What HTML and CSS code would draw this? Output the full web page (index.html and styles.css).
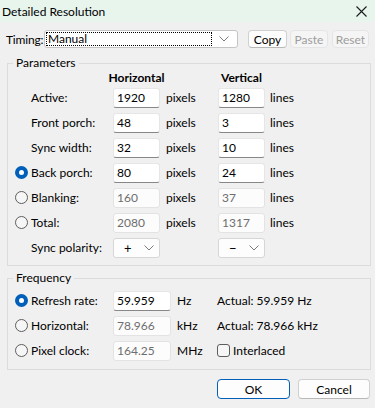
FILE: index.html
```html
<!DOCTYPE html>
<html lang="en">
  <head>
    <meta charset="UTF-8" />
    <title>Detailed Resolution</title>
    <link rel="stylesheet" href="styles.css">
  </head>
  <body>
    <div class="titlebar">
      <span>Detailed Resolution</span>
      <svg class="close" width="11" height="11" viewBox="0 0 11 11"><path d="M0.5 0.5 L10.5 10.5 M10.5 0.5 L0.5 10.5" stroke="#1a1a1a" stroke-width="1.1" fill="none"/></svg>
    </div>

    <div class="timing">
      <span class="timingLabel">Timing:</span>
      <div class="combo comboWide">
        <span class="focusText">Manual</span>
        <svg class="chev" width="10" height="6" viewBox="0 0 10 6"><path d="M0.5 0.5 L5 5 L9.5 0.5" stroke="#7a7a7a" fill="none"/></svg>
      </div>
      <button class="btn btnCopy">Copy</button>
      <button class="btn btnPaste" disabled>Paste</button>
      <button class="btn btnReset" disabled>Reset</button>
    </div>

    <fieldset class="group params">
      <legend>Parameters</legend>
      <div class="grid paramGrid">
        <span></span><span></span><span class="head">Horizontal</span><span></span><span class="head">Vertical</span><span></span>

        <span></span><span class="lbl">Active:</span>
        <input class="field" type="text" value="1920"><span class="unit">pixels</span>
        <input class="field" type="text" value="1280"><span class="unit">lines</span>

        <span></span><span class="lbl">Front porch:</span>
        <input class="field" type="text" value="48"><span class="unit">pixels</span>
        <input class="field" type="text" value="3"><span class="unit">lines</span>

        <span></span><span class="lbl">Sync width:</span>
        <input class="field" type="text" value="32"><span class="unit">pixels</span>
        <input class="field" type="text" value="10"><span class="unit">lines</span>

        <input class="radio" type="radio" name="p" checked><span class="lbl">Back porch:</span>
        <input class="field" type="text" value="80"><span class="unit">pixels</span>
        <input class="field" type="text" value="24"><span class="unit">lines</span>

        <input class="radio" type="radio" name="p"><span class="lbl">Blanking:</span>
        <input class="field" type="text" value="160" disabled><span class="unit">pixels</span>
        <input class="field" type="text" value="37" disabled><span class="unit">lines</span>

        <input class="radio" type="radio" name="p"><span class="lbl">Total:</span>
        <input class="field" type="text" value="2080" disabled><span class="unit">pixels</span>
        <input class="field" type="text" value="1317" disabled><span class="unit">lines</span>

        <span></span><span class="lbl">Sync polarity:</span>
        <div class="combo comboSmall">
          <span class="pol">+</span>
          <svg class="chev" width="10" height="6" viewBox="0 0 10 6"><path d="M0.5 0.5 L5 5 L9.5 0.5" stroke="#7a7a7a" fill="none"/></svg>
        </div>
        <span></span>
        <div class="combo comboSmall">
          <span class="pol">&minus;</span>
          <svg class="chev" width="10" height="6" viewBox="0 0 10 6"><path d="M0.5 0.5 L5 5 L9.5 0.5" stroke="#7a7a7a" fill="none"/></svg>
        </div>
        <span></span>
      </div>
    </fieldset>

    <fieldset class="group freq">
      <legend>Frequency</legend>
      <div class="grid freqGrid">
        <input class="radio" type="radio" name="f" checked><span class="lbl">Refresh rate:</span>
        <input class="field wide" type="text" value="59.959"><span class="unit">Hz</span>
        <span class="actual">Actual: 59.959 Hz</span>

        <input class="radio" type="radio" name="f"><span class="lbl">Horizontal:</span>
        <input class="field wide" type="text" value="78.966" disabled><span class="unit">kHz</span>
        <span class="actual">Actual: 78.966 kHz</span>

        <input class="radio" type="radio" name="f"><span class="lbl">Pixel clock:</span>
        <input class="field wide" type="text" value="164.25" disabled><span class="unit">MHz</span>
        <label class="actual check"><input class="checkbox" type="checkbox">Interlaced</label>
      </div>
    </fieldset>

    <div class="footer">
      <button class="btn btnOk">OK</button>
      <button class="btn btnCancel">Cancel</button>
    </div>
  </body>
</html>
```

FILE: styles.css
```css
* {
  box-sizing: border-box;
}

body {
  margin: 0;
  width: 375px;
  height: 408px;
  overflow: hidden;
  background-color: #f0f0f0;
  font-family: Lato, "Noto Sans", sans-serif;
  font-size: 12px;
  color: #000;
}

.titlebar {
  height: 22px;
  background-color: #e8f5ed;
  display: flex;
  align-items: center;
  justify-content: space-between;
  padding: 0 8px 0 2px;
  font-size: 12px;
}

.timing {
  display: flex;
  align-items: center;
  height: 18px;
  margin: 8px 0 0 6px;
}

.timingLabel {
  width: 38px;
  letter-spacing: -0.2px;
}

.combo {
  display: flex;
  align-items: center;
  background-color: #fff;
  border: 1px solid #c4c4c4;
  border-radius: 3px;
}

.comboWide {
  width: 194px;
  height: 18px;
  padding: 0 1px;
  margin-right: 10px;
}

.focusText {
  flex: 1;
  height: 14px;
  line-height: 12px;
  border: 1px dotted #000;
  padding-left: 1px;
}

.comboWide .chev {
  margin: 0 7px 0 7px;
}

.comboSmall {
  width: 47px;
  height: 20px;
  background-color: #fdfdfd;
  border-color: #d6d6d6;
  justify-content: space-between;
  padding: 0 5px 0 10px;
}

.pol {
  font-size: 13px;
}

.btn {
  font-family: Lato, "Noto Sans", sans-serif;
  font-size: 12px;
  color: #000;
  height: 18px;
  padding: 0;
  background-color: #fdfdfd;
  border: 1px solid #d0d0d0;
  border-bottom-color: #b8b8b8;
  border-radius: 4px;
}

.btn:disabled {
  background-color: #f5f5f5;
  border-color: #e5e5e5;
  color: #9d9d9d;
}

.btnCopy {
  width: 39px;
  margin-right: 3px;
}

.btnPaste {
  width: 38px;
  margin-right: 4px;
}

.btnReset {
  width: 37px;
}

.group {
  width: 364px;
  margin: 0 0 0 7px;
  border: 1px solid #dcdcdc;
  padding: 0 0 5px 7px;
  min-width: 0;
}

.group legend {
  padding: 0 3px;
  margin-left: -2px;
  line-height: 14px;
}

.params {
  margin-top: 8px;
}

.freq {
  margin-top: 5px;
  padding-top: 3px;
  padding-bottom: 6px;
}

.grid {
  display: grid;
  align-items: center;
}

.paramGrid {
  grid-template-columns: 16px 82px 47px 58px 47px auto;
  grid-template-rows: 15px repeat(7, 25px);
}

.freqGrid {
  grid-template-columns: 16px 82px 58px 46px auto;
  grid-auto-rows: 25px;
}

.head {
  font-weight: bold;
  justify-self: center;
  white-space: nowrap;
}

.unit {
  padding-left: 6px;
}

.paramGrid .unit:nth-child(6n) {
  padding-left: 5px;
}

.field {
  width: 47px;
  height: 20px;
  margin: 0;
  padding: 0 0 0 3px;
  font-family: Lato, "Noto Sans", sans-serif;
  font-size: 12px;
  color: #000;
  background-color: #fff;
  border: 1px solid #e6e6e6;
  border-bottom-color: #878787;
  border-radius: 3px;
  outline: none;
}

.field.wide {
  width: 58px;
}

.field:disabled {
  color: #6e6e6e;
  background-color: #fcfcfc;
  border-color: #e3e3e3;
}

.radio {
  appearance: none;
  width: 13px;
  height: 13px;
  margin: 0;
  border-radius: 50%;
  border: 1px solid #5d5d5d;
  background-color: #f6f6f6;
}

.radio:checked {
  border: 4px solid #005fb8;
  background-color: #fff;
}

.check {
  display: flex;
  align-items: center;
}

.checkbox {
  appearance: none;
  width: 13px;
  height: 13px;
  margin: 0 3px 0 0;
  border: 1px solid #5d5d5d;
  border-radius: 3px;
  background-color: #f6f6f6;
}

.footer {
  display: flex;
  justify-content: flex-end;
  gap: 8px;
  margin-top: 9px;
  padding-right: 5px;
}

.footer .btn {
  height: 20px;
}

.btnOk {
  width: 73px;
  border: 1px solid #005fb8;
}

.btnCancel {
  width: 72px;
}
```
